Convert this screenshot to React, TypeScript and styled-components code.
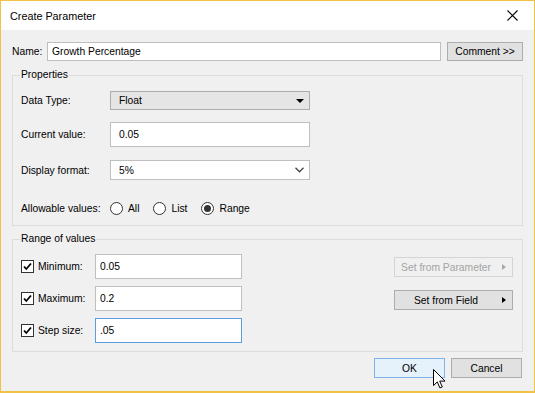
import React from 'react';
import styled, { createGlobalStyle } from 'styled-components';

const GlobalStyle = createGlobalStyle`
  html, body {
    margin: 0;
    padding: 0;
    background: #f0f0f0;
  }
`;

const Window = styled.div`
  position: relative;
  width: 535px;
  height: 393px;
  box-sizing: border-box;
  border: 1px solid #f1c246;
  border-bottom-width: 2px;
  background: #f0f0f0;
  display: flex;
  flex-direction: column;
  font-family: 'Liberation Sans', Arial, sans-serif;
  font-size: 10.3px;
  color: #000;
`;

const TitleBar = styled.div`
  height: 29px;
  flex-shrink: 0;
  background: #fff;
  display: flex;
  align-items: center;
  justify-content: space-between;
  padding-left: 9px;
`;

const Title = styled.span`
  font-size: 10.8px;
`;

const CloseButton = styled.div`
  width: 44px;
  height: 29px;
  display: flex;
  align-items: center;
  justify-content: center;
`;

const Body = styled.div`
  flex: 1;
  padding: 12px 11px 0 11px;
  display: flex;
  flex-direction: column;
`;

const NameRow = styled.div`
  display: flex;
  align-items: center;
  height: 19px;
`;

const NameLabel = styled.label`
  width: 35px;
  flex-shrink: 0;
`;

const TextBox = styled.div<{ $focused?: boolean; $width?: number; $height?: number }>`
  box-sizing: border-box;
  width: ${(p) => (p.$width ? `${p.$width}px` : 'auto')};
  height: ${(p) => p.$height || 19}px;
  background: #fff;
  border: 1px solid ${(p) => (p.$focused ? '#5a9ee0' : '#bfbfbf')};
  display: flex;
  align-items: center;
  padding-left: 4px;
`;

const NameBox = styled(TextBox)`
  flex: 1;
`;

const Button = styled.div<{ $width: number; $disabled?: boolean; $primary?: boolean; $arrow?: boolean }>`
  box-sizing: border-box;
  width: ${(p) => p.$width}px;
  height: 20px;
  display: flex;
  align-items: center;
  justify-content: center;
  position: relative;
  padding-right: ${(p) => (p.$arrow ? 15 : 0)}px;
  border: 1px solid
    ${(p) => (p.$primary ? '#7eb4ea' : p.$disabled ? '#d4d4d4' : '#adadad')};
  background: ${(p) => (p.$primary ? '#e5f1fb' : p.$disabled ? '#f0f0f0' : '#e1e1e1')};
  color: ${(p) => (p.$disabled ? '#a3a3a3' : '#000')};
`;

const CommentButton = styled(Button)`
  margin-left: 6px;
  height: 19px;
`;

const GroupBox = styled.fieldset<{ $top: number; $padTop: number }>`
  margin: ${(p) => p.$top}px 0 0 0;
  min-width: 0;
  border: 1px solid #dcdcdc;
  padding: ${(p) => p.$padTop}px 8px 8px 8px;
`;

const GroupTitle = styled.legend`
  padding: 0 1px;
  margin-left: -1px;
  line-height: 16px;
`;

const FormRow = styled.div<{ $top: number; $height: number }>`
  display: grid;
  grid-template-columns: 89px 200px;
  align-items: center;
  margin-top: ${(p) => p.$top}px;
  height: ${(p) => p.$height}px;
`;

const Combo = styled.div<{ $flat?: boolean }>`
  box-sizing: border-box;
  height: 100%;
  display: flex;
  align-items: center;
  justify-content: space-between;
  padding: 0 5px 0 8px;
  border: 1px solid ${(p) => (p.$flat ? '#bfbfbf' : '#adadad')};
  background: ${(p) => (p.$flat ? '#fff' : '#e5e5e5')};
`;

const ValueBox = styled(TextBox)`
  padding-left: 8px;
`;

const RadioGroup = styled.div`
  display: flex;
  align-items: center;
`;

const RadioOption = styled.label`
  display: flex;
  align-items: center;
  gap: 5px;
  margin-right: 14px;
`;

const RadioCircle = styled.span<{ $checked?: boolean }>`
  box-sizing: border-box;
  width: 13px;
  height: 13px;
  border-radius: 50%;
  border: 1px solid #333;
  background: #fff;
  display: flex;
  align-items: center;
  justify-content: center;

  &::after {
    content: '';
    display: ${(p) => (p.$checked ? 'block' : 'none')};
    width: 7px;
    height: 7px;
    border-radius: 50%;
    background: #333;
  }
`;

const RangeLayout = styled.div`
  display: flex;
  justify-content: space-between;
  padding-right: 1px;
`;

const RangeRows = styled.div`
  display: flex;
  flex-direction: column;
  gap: 7px;
`;

const RangeRow = styled.div`
  display: grid;
  grid-template-columns: 74px 147px;
  align-items: center;
  height: 25px;
`;

const CheckLabel = styled.label`
  display: flex;
  align-items: center;
  gap: 4px;
`;

const CheckBox = styled.span`
  box-sizing: border-box;
  width: 13px;
  height: 13px;
  border: 1px solid #333;
  background: #fff;
  display: flex;
  align-items: center;
  justify-content: center;
`;

const SideButtons = styled.div`
  display: flex;
  flex-direction: column;
  gap: 13px;
  padding-top: 3px;
`;

const Arrow = styled.span<{ $disabled?: boolean }>`
  position: absolute;
  right: 6px;
  top: 6px;
  width: 0;
  height: 0;
  border-top: 3.5px solid transparent;
  border-bottom: 3.5px solid transparent;
  border-left: 4px solid ${(p) => (p.$disabled ? '#a8a8a8' : '#000')};
`;

const Footer = styled.div`
  display: flex;
  justify-content: flex-end;
  gap: 6px;
  margin-top: 6px;
  padding-right: 1px;
`;

const Cursor = styled.svg`
  position: absolute;
  left: 432px;
  top: 368px;
`;

const DownTriangle = () => (
  <svg width="8" height="4" viewBox="0 0 8 4">
    <path d="M0 0h8L4 4z" fill="#000" />
  </svg>
);

const Chevron = () => (
  <svg width="9" height="6" viewBox="0 0 9 6">
    <path d="M0.5 0.8l4 4 4-4" fill="none" stroke="#444" strokeWidth="1.3" />
  </svg>
);

const Check = () => (
  <svg width="9" height="9" viewBox="0 0 9 9">
    <path d="M1 4.5l2.3 2.5L8 1.5" fill="none" stroke="#000" strokeWidth="1.8" />
  </svg>
);

const rangeRows = [
  { label: 'Minimum:', value: '0.05' },
  { label: 'Maximum:', value: '0.2' },
  { label: 'Step size:', value: '.05', focused: true },
];

const App = () => {
  return (
    <>
      <GlobalStyle />
      <Window>
        <TitleBar>
          <Title>Create Parameter</Title>
          <CloseButton>
            <svg width="11" height="11" viewBox="0 0 11 11">
              <path d="M0.5 0.5l10 10M10.5 0.5l-10 10" stroke="#000" strokeWidth="1.1" />
            </svg>
          </CloseButton>
        </TitleBar>
        <Body>
          <NameRow>
            <NameLabel>Name:</NameLabel>
            <NameBox>Growth Percentage</NameBox>
            <CommentButton $width={76}>Comment &gt;&gt;</CommentButton>
          </NameRow>

          <GroupBox $top={6} $padTop={8}>
            <GroupTitle>Properties</GroupTitle>
            <FormRow $top={0} $height={19}>
              <span>Data Type:</span>
              <Combo>
                Float
                <DownTriangle />
              </Combo>
            </FormRow>
            <FormRow $top={12} $height={25}>
              <span>Current value:</span>
              <ValueBox $height={25}>0.05</ValueBox>
            </FormRow>
            <FormRow $top={13} $height={20}>
              <span>Display format:</span>
              <Combo $flat>
                5%
                <Chevron />
              </Combo>
            </FormRow>
            <FormRow $top={19} $height={18}>
              <span>Allowable values:</span>
              <RadioGroup>
                <RadioOption>
                  <RadioCircle />
                  All
                </RadioOption>
                <RadioOption>
                  <RadioCircle />
                  List
                </RadioOption>
                <RadioOption>
                  <RadioCircle $checked />
                  Range
                </RadioOption>
              </RadioGroup>
            </FormRow>
          </GroupBox>

          <GroupBox $top={5} $padTop={7}>
            <GroupTitle>Range of values</GroupTitle>
            <RangeLayout>
              <RangeRows>
                {rangeRows.map((row) => (
                  <RangeRow key={row.label}>
                    <CheckLabel>
                      <CheckBox>
                        <Check />
                      </CheckBox>
                      {row.label}
                    </CheckLabel>
                    <TextBox $height={25} $focused={row.focused}>
                      {row.value}
                    </TextBox>
                  </RangeRow>
                ))}
              </RangeRows>
              <SideButtons>
                <Button $width={119} $disabled $arrow>
                  Set from Parameter
                  <Arrow $disabled />
                </Button>
                <Button $width={119} $arrow>
                  Set from Field
                  <Arrow />
                </Button>
              </SideButtons>
            </RangeLayout>
          </GroupBox>

          <Footer>
            <Button $width={71} $primary>
              OK
            </Button>
            <Button $width={71}>Cancel</Button>
          </Footer>
        </Body>
        <Cursor width="13" height="20" viewBox="0 0 13 20">
          <path
            d="M0.5 0.5v16l3.8-3.6 2.6 6 2.4-1-2.6-5.8h5.3z"
            fill="#fff"
            stroke="#000"
            strokeWidth="1"
            strokeLinejoin="round"
          />
        </Cursor>
      </Window>
    </>
  );
};

export default App;
